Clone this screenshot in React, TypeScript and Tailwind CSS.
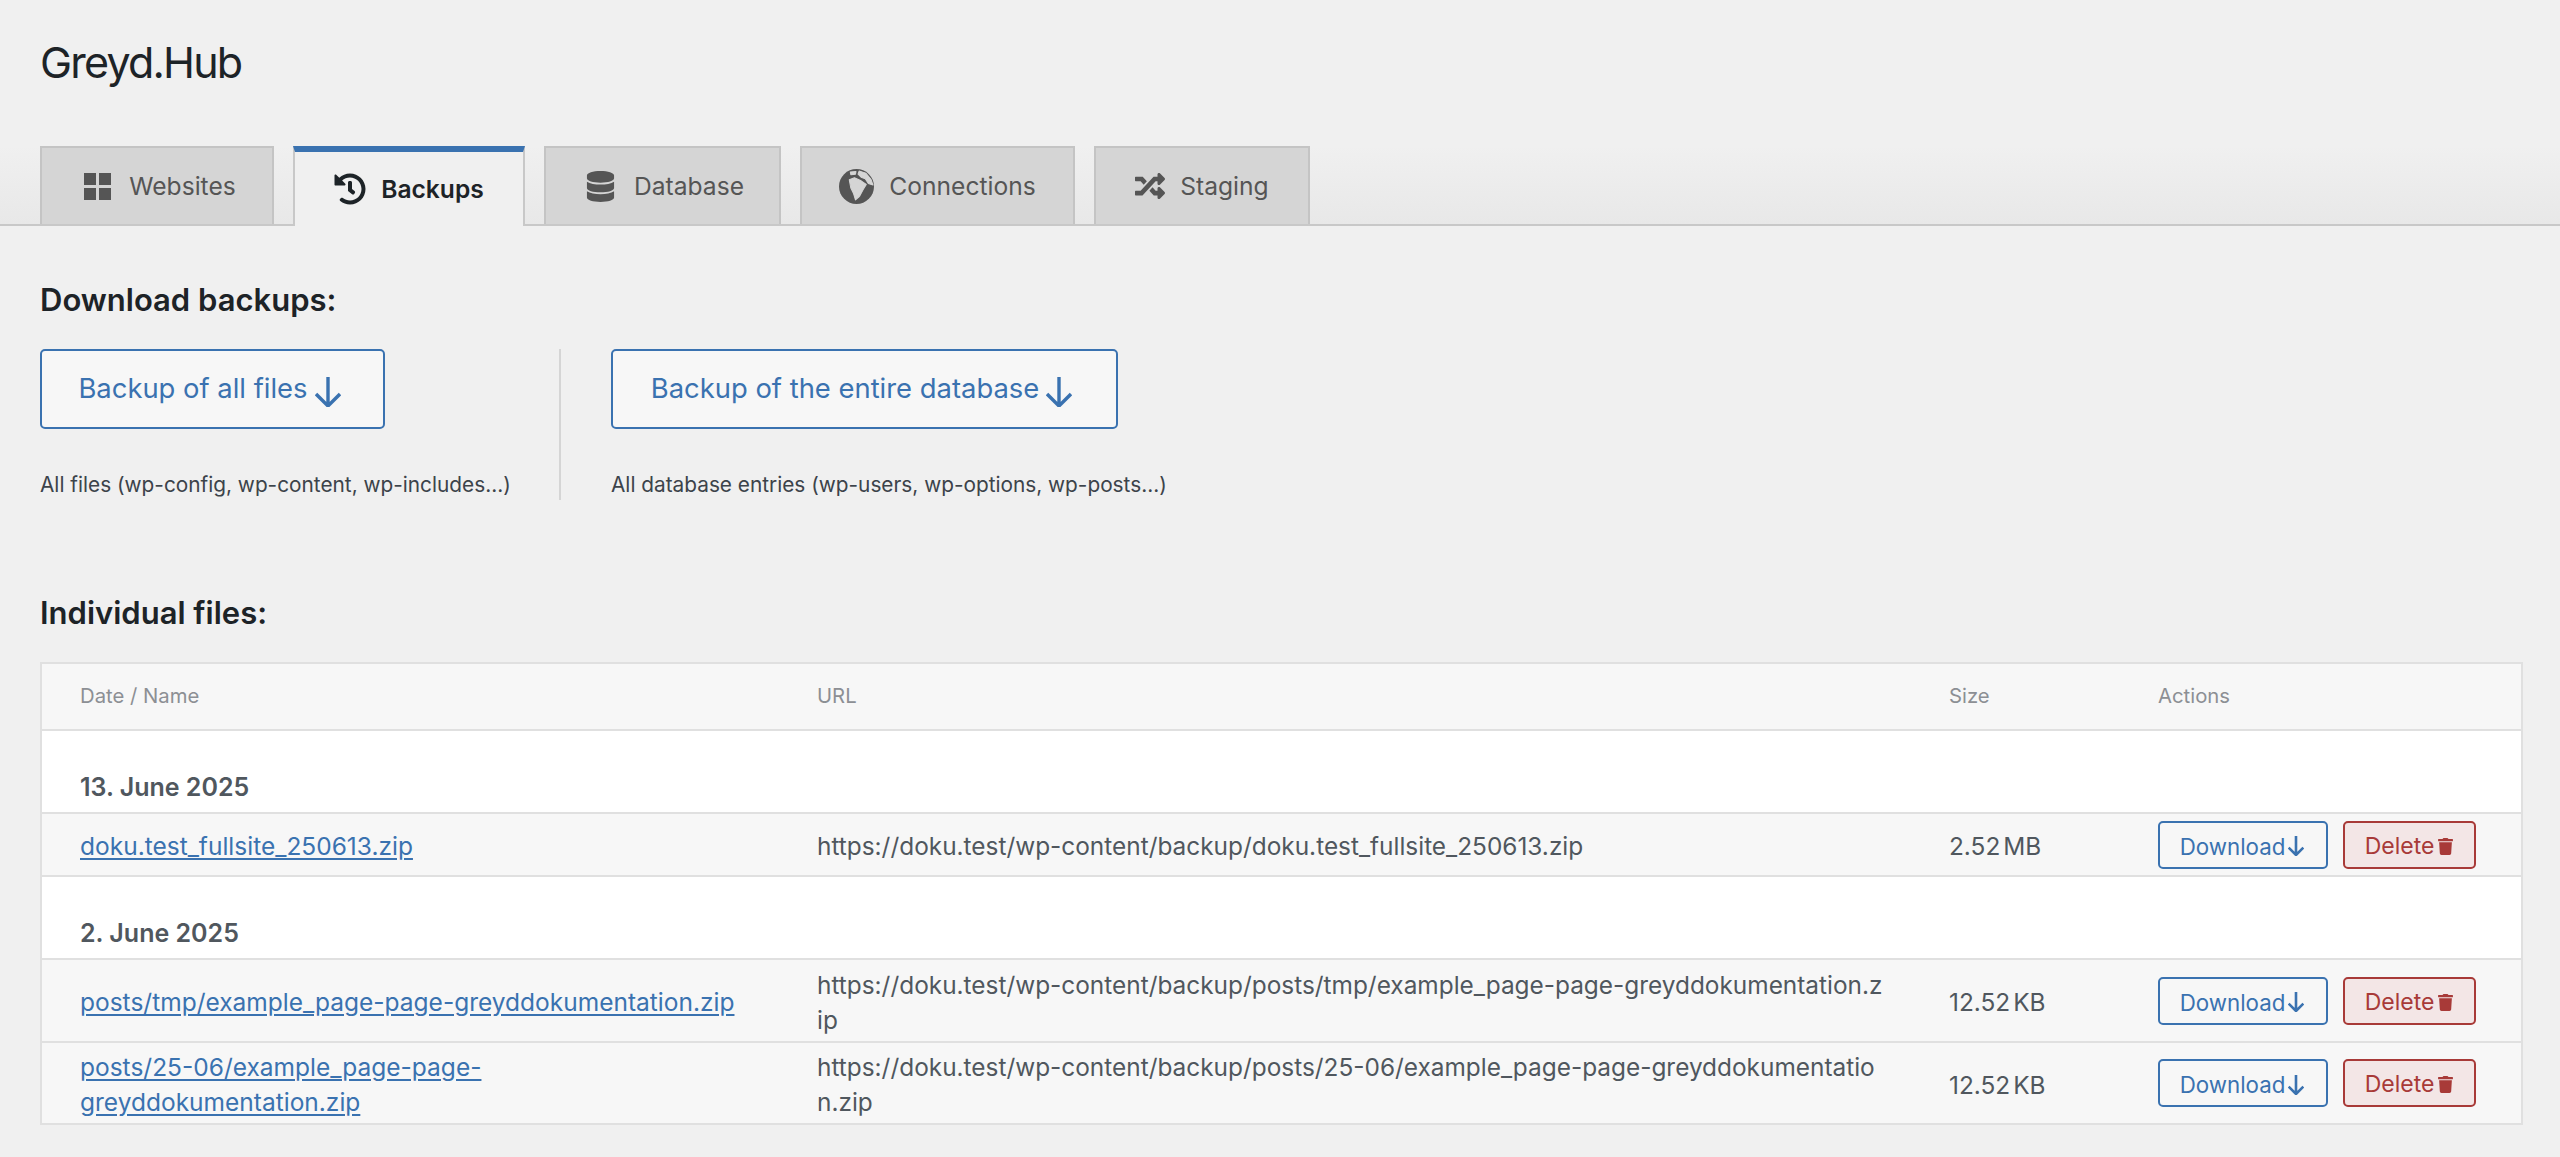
import React from 'react'
import { FaHistory, FaDatabase, FaRandom, FaTrash } from 'react-icons/fa'

// four squares, the wide FA glyph doesn't match here
function GridIcon() {
  return (
    <svg width="27" height="27" viewBox="0 0 27 27" fill="currentColor">
      <rect x="0" y="0" width="12" height="12" />
      <rect x="15" y="0" width="12" height="12" />
      <rect x="0" y="15" width="12" height="12" />
      <rect x="15" y="15" width="12" height="12" />
    </svg>
  )
}

function GlobeIcon() {
  return (
    <svg width="35" height="35" viewBox="0 0 34 34">
      <circle cx="17" cy="17" r="17" fill="currentColor" />
      <g fill="#d5d5d5" stroke="#d5d5d5" strokeWidth="1" strokeLinejoin="round">
        <path d="M10 10.5 15 8.5 21.5 11.5 26.5 15 23.5 20 20 26.5 16 30 14 23.5 11.5 18.5Z" />
        <path d="M11 3 16.5 2.5 16 5 11.5 5.5Z" />
        <path d="M19.5 2 26 4 31 10 33 15.5 28.5 14 25.5 9.5 21.5 8 18.5 5Z" />
      </g>
    </svg>
  )
}

function DownArrow({ width, height, stroke }: { width: number; height: number; stroke: number }) {
  const mid = width / 2
  const wing = width * 0.46
  return (
    <svg width={width} height={height} viewBox={`0 0 ${width} ${height}`} fill="none" stroke="currentColor" strokeWidth={stroke}>
      <path d={`M${mid} 0V${height - 2}M${mid - wing} ${height - wing - 1}L${mid} ${height - 1}L${mid + wing} ${height - wing - 1}`} />
    </svg>
  )
}

const tabs = [
  { label: 'Websites', icon: <GridIcon />, width: 'w-[234px]', gap: 'gap-[18px]', pad: 'pl-[6px]' },
  { label: 'Backups', icon: <FaHistory size={32} />, width: 'w-[232px]', gap: 'gap-[15px]', pad: '', active: true },
  { label: 'Database', icon: <FaDatabase size={31} />, width: 'w-[237px]', gap: 'gap-[18px]', pad: 'pl-[4px]' },
  { label: 'Connections', icon: <GlobeIcon />, width: 'w-[275px]', gap: 'gap-[15px]', pad: '' },
  { label: 'Staging', icon: <FaRandom size={30} />, width: 'w-[216px]', gap: 'gap-[15px]', pad: '' },
]

const groups = [
  {
    date: '13. June 2025',
    files: [
      {
        name: 'doku.test_fullsite_250613.zip',
        url: 'https://doku.test/wp-content/backup/doku.test_fullsite_250613.zip',
        size: '2.52',
        unit: 'MB',
        height: 'h-[63px]',
      },
    ],
  },
  {
    date: '2. June 2025',
    files: [
      {
        name: 'posts/tmp/example_page-page-greyddokumentation.zip',
        url: 'https://doku.test/wp-content/backup/posts/tmp/example_page-page-greyddokumentation.zip',
        size: '12.52',
        unit: 'KB',
        height: 'h-[83px]',
      },
      {
        name: 'posts/25-06/example_page-page-greyddokumentation.zip',
        url: 'https://doku.test/wp-content/backup/posts/25-06/example_page-page-greyddokumentation.zip',
        size: '12.52',
        unit: 'KB',
        height: 'h-[82px]',
      },
    ],
  },
]

const columns = 'grid grid-cols-[737px_1132px_209px_1fr] items-center'

function BigButton({ label, width }: { label: string; width: string }) {
  return (
    <button
      className={`${width} h-[80px] flex items-center justify-center gap-[7px] pr-[6px] rounded-[5px] border-2 border-[#3a72b0] bg-[#f7f7f7] text-[27.4px] text-[#3a72b0]`}
    >
      {label}
      <span className="mt-[5px]">
        <DownArrow width={26} height={30} stroke={3.4} />
      </span>
    </button>
  )
}

function FileRow({ file }: { file: (typeof groups)[number]['files'][number] }) {
  return (
    <div className={`${columns} ${file.height} border-b-2 border-[#e0e0e0] bg-[#f7f7f7] text-[24.4px] leading-[35px] text-[#50575e]`}>
      <a className="pl-[38px] pr-[24px] pt-[4px] text-[24.5px] text-[#3a72b0] underline underline-offset-[3px]">{file.name}</a>
      <span className="pl-[38px] pr-[26px] pt-[4px] break-all">{file.url}</span>
      <span className="pl-[38px] pt-[4px]">
        {file.size}
        <span className="ml-[3px]">{file.unit}</span>
      </span>
      <div className="pl-[38px] flex gap-[15px]">
        <button className="w-[170px] h-[48px] flex items-center justify-center gap-[3px] pt-[3px] pr-[2px] rounded-[5px] border-2 border-[#3a72b0] bg-[#f7f7f7] text-[22.3px] text-[#3a72b0]">
          Download
          <DownArrow width={16} height={20} stroke={2.6} />
        </button>
        <button className="w-[133px] h-[48px] flex items-center justify-center gap-[3px] pt-[3px] rounded-[5px] border-2 border-[#a83a38] bg-[#f3e6e6] text-[23px] text-[#a83a38]">
          Delete
          <FaTrash size={17} />
        </button>
      </div>
    </div>
  )
}

export default function App() {
  return (
    <div className="min-h-[1157px] bg-[#f0f0f0] font-['Inter',sans-serif] text-[#1d2327]">
      <h1 className="h-[146px] pl-[40px] pt-[37px] text-[43px] leading-[50px] tracking-[-1.8px] font-normal">Greyd.Hub</h1>

      <nav className="h-[80px] flex gap-[19px] pl-[40px] border-b-2 border-[#c8c8c8] bg-gradient-to-b from-[#f0f0f0] to-[#e8e8e8]">
        {tabs.map(({ label, icon, width, gap, pad, active }) => (
          <div
            key={label}
            className={
              active
                ? `${width} ${gap} ${pad} h-[80px] flex items-center justify-center border-x-2 border-[#c8c8c8] border-t-[6px] border-t-[#3a72b0] bg-[#f0f0f0] text-[24.6px] font-semibold text-[#1d2327]`
                : `${width} ${gap} ${pad} h-[78px] flex items-center justify-center border-x-2 border-t-2 border-[#c4c4c4] bg-[#d5d5d5] text-[24.6px] text-[#555555]`
            }
          >
            {icon}
            {label}
          </div>
        ))}
      </nav>

      <main className="pl-[40px] pr-[37px]">
        <h2 className="mt-[56px] text-[31px] leading-[36px] font-semibold">Download backups:</h2>

        <div className="mt-[31px] flex">
          <div className="w-[519px] h-[151px] flex flex-col justify-between">
            <BigButton label="Backup of all files" width="w-[345px]" />
            <p className="text-[20.8px] leading-[36px] mb-[-3px] text-[#3c434a]">All files (wp-config, wp-content, wp-includes...)</p>
          </div>
          <div className="w-[2px] h-[151px] bg-[#d5d5d5]" />
          <div className="ml-[50px] h-[151px] flex flex-col justify-between">
            <BigButton label="Backup of the entire database" width="w-[507px]" />
            <p className="text-[20.8px] leading-[36px] mb-[-3px] text-[#3c434a]">All database entries (wp-users, wp-options, wp-posts...)</p>
          </div>
        </div>

        <h2 className="mt-[95px] text-[31px] leading-[36px] font-semibold">Individual files:</h2>

        <div className="mt-[31px] border-x-2 border-t-2 border-[#e0e0e0] bg-white">
          <div className={`${columns} h-[67px] border-b-2 border-[#e0e0e0] bg-[#f7f7f7] text-[20.3px] text-[#8c8f94]`}>
            <span className="pl-[38px]">Date / Name</span>
            <span className="pl-[38px]">URL</span>
            <span className="pl-[38px]">Size</span>
            <span className="pl-[38px]">Actions</span>
          </div>
          {groups.map((group) => (
            <div key={group.date}>
              <div className="h-[83px] flex items-end pb-[6px] pl-[38px] border-b-2 border-[#e0e0e0] text-[25px] font-semibold text-[#50575e]">
                {group.date}
              </div>
              {group.files.map((file) => (
                <FileRow key={file.name} file={file} />
              ))}
            </div>
          ))}
        </div>
      </main>
    </div>
  )
}
